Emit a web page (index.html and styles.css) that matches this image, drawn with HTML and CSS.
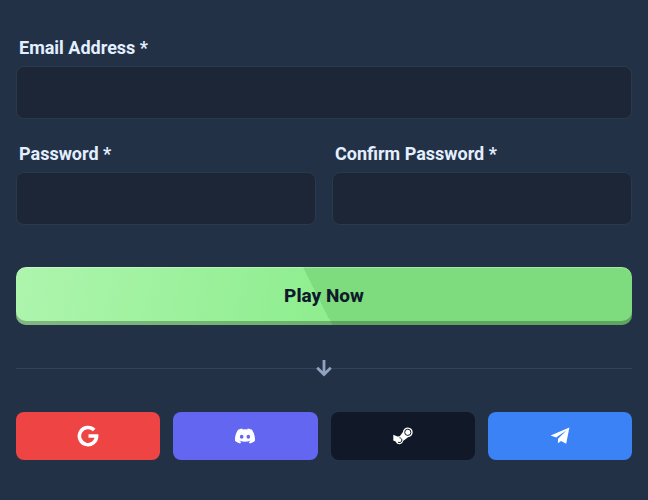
FILE: index.html
```html
<!DOCTYPE html>
<html lang="en">
<head>
<meta charset="utf-8">
<meta name="viewport" content="width=device-width, initial-scale=1">
<title>Create account</title>
<link rel="stylesheet" href="styles.css">
</head>
<body>
<main class="signup">
  <form class="form">
    <div class="fields">
      <div class="field field-wide">
        <label for="email">Email Address *</label>
        <input id="email" type="email" required>
      </div>
      <div class="field">
        <label for="password">Password *</label>
        <input id="password" type="password" required>
      </div>
      <div class="field">
        <label for="confirm">Confirm Password *</label>
        <input id="confirm" type="password" required>
      </div>
    </div>
    <button class="play" type="submit">Play Now</button>
  </form>
  <div class="divider">
    <svg width="24" height="24" viewBox="0 0 24 24" aria-hidden="true"><path d="M12 4V18.500M5.200 11.700L12 18.500L18.800 11.700" fill="none" stroke="currentColor" stroke-width="2.800"/></svg>
  </div>
  <div class="socials">
    <button class="social google" type="button" aria-label="Google">
      <svg width="22" height="22" viewBox="0 0 22 22" aria-hidden="true"><path d="M17.200 5.100A8.600 8.600 0 1 0 19.600 11H11.500" fill="none" stroke="currentColor" stroke-width="3.600"/></svg>
    </button>
    <button class="social discord" type="button" aria-label="Discord">
      <svg width="20" height="20" viewBox="0 0 24 24" aria-hidden="true"><path fill="currentColor" d="M20.317 4.370a19.791 19.791 0 0 0-4.885-1.515.074.074 0 0 0-.079.037c-.21.375-.444.864-.608 1.250a18.270 18.270 0 0 0-5.487 0 12.640 12.640 0 0 0-.617-1.250.077.077 0 0 0-.079-.037A19.736 19.736 0 0 0 3.677 4.370a.070.070 0 0 0-.032.027C.533 9.046-.32 13.580.099 18.058a.082.082 0 0 0 .031.056 19.900 19.900 0 0 0 5.993 3.030.078.078 0 0 0 .084-.028 14.090 14.090 0 0 0 1.226-1.994.076.076 0 0 0-.041-.106 13.107 13.107 0 0 1-1.872-.892.077.077 0 0 1-.008-.128 10.200 10.200 0 0 0 .372-.292.074.074 0 0 1 .077-.010c3.928 1.793 8.180 1.793 12.062 0a.074.074 0 0 1 .078.010c.12.098.246.198.373.292a.077.077 0 0 1-.006.127 12.299 12.299 0 0 1-1.873.892.077.077 0 0 0-.041.107c.36.698.772 1.362 1.225 1.993a.076.076 0 0 0 .084.028 19.839 19.839 0 0 0 6.002-3.030.077.077 0 0 0 .032-.054c.5-5.177-.838-9.674-3.549-13.660a.061.061 0 0 0-.031-.030zM8.020 15.330c-1.183 0-2.157-1.085-2.157-2.419 0-1.333.956-2.419 2.157-2.419 1.210 0 2.176 1.096 2.157 2.420 0 1.333-.956 2.418-2.157 2.418zm7.975 0c-1.183 0-2.157-1.085-2.157-2.419 0-1.333.955-2.419 2.157-2.419 1.210 0 2.176 1.096 2.157 2.420 0 1.333-.946 2.418-2.157 2.418z"/></svg>
    </button>
    <button class="social steam" type="button" aria-label="Steam">
      <svg width="20" height="20" viewBox="0 0 20 20" aria-hidden="true">
        <path fill="currentColor" d="M.3 8.800L4.400 10.400L6.800 10.200L9.900 6A4.900 4.900 0 1 1 15 11.200L10.100 15A3.900 3.900 0 0 1 2.600 15.600L.3 14.500Z"/>
        <circle class="steam-ring" cx="14.800" cy="6.300" r="3.100"/>
        <path class="steam-ring" d="M6.500 11.800A2.400 2.400 0 1 1 5 16.100"/>
      </svg>
    </button>
    <button class="social telegram" type="button" aria-label="Telegram">
      <svg width="20" height="20" viewBox="0 0 20 20" aria-hidden="true"><path fill="currentColor" d="M19.400 1.500L.6 9.400L6.100 11.600L16.700 4.300L8 12.800L7.900 17.300L11 15L16.200 17.800Z"/></svg>
    </button>
  </div>
</main>
</body>
</html>
```
FILE: styles.css
```css
* {
  box-sizing: border-box;
}

body {
  margin: 0;
  background: #233147;
  color: #e2efff;
  font-family: Roboto, "Liberation Sans", sans-serif;
}

.signup {
  padding: 36px 16px;
}

.fields {
  display: grid;
  grid-template-columns: 1fr 1fr;
  gap: 23px 16px;
}

.field {
  display: flex;
  flex-direction: column;
  gap: 6px;
}

.field-wide {
  grid-column: 1 / -1;
}

.field label {
  padding-left: 3px;
  font-size: 18px;
  font-weight: 700;
  line-height: 24px;
}

.field input {
  width: 100%;
  height: 53px;
  padding: 0 16px;
  border: 1px solid #293a4b;
  border-radius: 8px;
  background: #1c2636;
  color: inherit;
  font: inherit;
}

.play {
  display: block;
  width: 100%;
  height: 58px;
  margin-top: 42px;
  padding: 0;
  border: 0;
  border-radius: 10px;
  background:
    linear-gradient(63deg, transparent 49%, #7edc7e 49%),
    linear-gradient(100deg, #aef5ae, #90ee90 48%);
  box-shadow: inset 0 -4px #00000040, inset 0 1px #ffffff50;
  color: #0f1b2a;
  font: 800 19px/24px Roboto, "Liberation Sans", sans-serif;
}

.divider {
  display: flex;
  align-items: center;
  margin: 31px 0 32px;
  color: #8fa2bf;
}

.divider::before,
.divider::after {
  content: "";
  flex: 1;
  height: 1px;
  background: #33435a;
}

.divider svg {
  margin: 0 -4px;
}

.socials {
  display: grid;
  grid-template-columns: repeat(4, 1fr);
  gap: 13px;
}

.social {
  display: flex;
  align-items: center;
  justify-content: center;
  height: 48px;
  padding: 0;
  border: 0;
  border-radius: 8px;
  color: #fff;
}

.google {
  background: #ef4444;
}

.discord {
  background: #6366f1;
}

.steam {
  background: #111827;
}

.telegram {
  background: #3b82f6;
}

.steam-ring {
  fill: none;
  stroke: #111827;
  stroke-width: 1;
}
```
